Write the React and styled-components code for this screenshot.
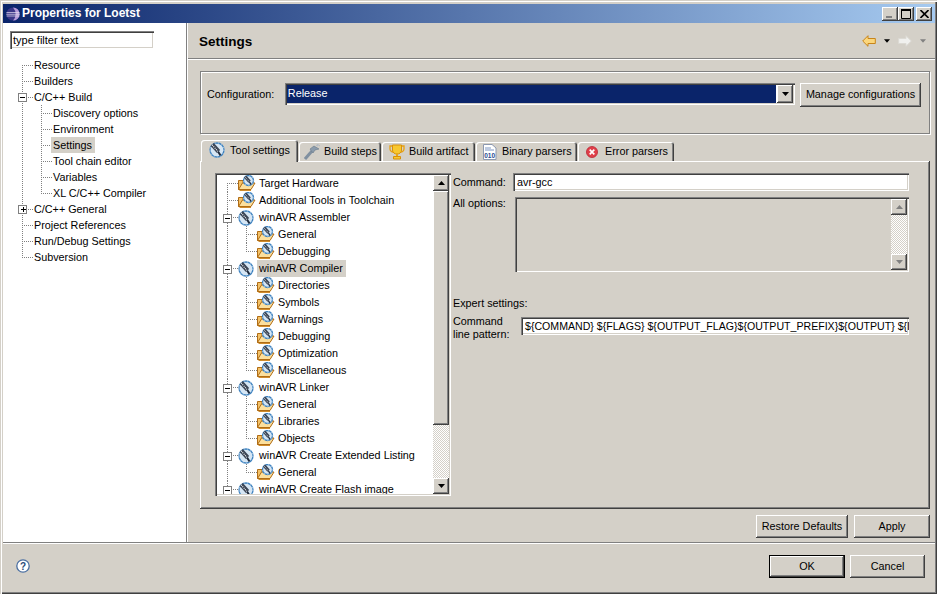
import React from "react";
import styled, { createGlobalStyle } from "styled-components";

const FACE = "#d4d0c8";
const raised = "inset -1px -1px #404040, inset 1px 1px #fff, inset -2px -2px #808080";
const sunken = "inset 1px 1px #808080, inset 2px 2px #404040, inset -1px -1px #fff, inset -2px -2px #d4d0c8";
const dotV = "repeating-linear-gradient(to bottom,#808080 0 1px,transparent 1px 2px)";
const dotH = "repeating-linear-gradient(to right,#808080 0 1px,transparent 1px 2px)";

const Global = createGlobalStyle`
  html, body { margin: 0; padding: 0; background: ${FACE}; }
  * { box-sizing: border-box; }
`;

const Win = styled.div`
  width: 937px; height: 594px; overflow: hidden;
  display: flex; flex-direction: column;
  padding: 4px 2px 3px 3px;
  background: ${FACE};
  font: 10.8px/13px "Liberation Sans", Arial, sans-serif;
  color: #000;
  box-shadow: inset 1px 1px ${FACE}, inset 2px 2px #fff, inset -1px -1px #404040, inset -2px -2px #808080;
`;
const TitleBar = styled.div`
  height: 19px; flex: none;
  display: flex; align-items: center; gap: 2px;
  padding: 0 3px 0 3px;
  background: linear-gradient(to right, #0a246a, #a6caf0);
`;
const TitleText = styled.div`
  flex: 1; color: #fff; font-weight: bold; font-size: 12px;
`;
const WinBtns = styled.div`display: flex; align-items: center;`;
const WinBtn = styled.div`
  width: 16px; height: 14px; background: ${FACE}; box-shadow: ${raised};
  margin-left: ${p => p.$gap || 0}px;
  display: flex; align-items: center; justify-content: center;
`;
const Main = styled.div`
  height: 519px; flex: none; margin-top: 0;
  display: flex;
`;
const Side = styled.div`
  width: 183px; flex: none; background: #fff;
  padding: 7px 0 0 7px;
  border-top: 1px solid #fff;
`;
const Filter = styled.div`
  width: 144px; height: 18px;
  background: #fff; box-shadow: ${sunken};
  padding: 3px 0 0 3px; font-size: 11px; line-height: 13px;
  margin-bottom: 8px;
`;
const SideTree = styled.div`margin-left: 4px;`;
const VSep = styled.div`
  width: 2px; flex: none; background: linear-gradient(to right, #808080 1px, #fff 1px);
`;
const Right = styled.div`flex: 1; min-width: 0; display: flex; flex-direction: column;`;
const Head = styled.div`
  height: 36px; flex: none;
  display: flex; align-items: center; justify-content: space-between;
  padding: 1px 9px 0 11px;
  border-bottom: 1px solid #808080;
  box-shadow: 0 1px #fff;
`;
const HeadTitle = styled.div`font-weight: bold; font-size: 13.5px;`;
const Nav = styled.div`display: flex; align-items: center; gap: 8px;`;
const Body = styled.div`
  flex: 1; padding: 12px 5px 0 12px; display: flex; flex-direction: column;
`;
const Group = styled.div`
  height: 63px; flex: none;
  border: 1px solid #808080; box-shadow: 1px 1px #fff, inset 1px 1px #fff;
  display: flex; align-items: flex-start;
  padding: 11px 8px 0 6px;
`;
const GroupLabel = styled.div`width: 78px; padding-top: 5px;`;
const Combo = styled.div`
  width: 511px; height: 22px; background: #fff; box-shadow: ${sunken};
  padding: 2px; display: flex; gap: 0;
`;
const ComboText = styled.div`
  flex: 1; background: #0a246a; color: #fff; padding: 2px 0 0 1px; margin-right: 1px;
`;
const ComboBtn = styled.div`
  width: 16px; background: ${FACE}; box-shadow: ${raised};
  display: flex; align-items: center; justify-content: center;
`;
const Btn = styled.div`
  width: ${p => p.$w}px; height: ${p => p.$h || 23}px; flex: none;
  margin-left: ${p => p.$ml || 0}px;
  background: ${FACE};
  box-shadow: ${p => p.$def
    ? "inset 0 0 0 1px #000, inset -2px -2px #404040, inset 2px 2px #fff, inset -3px -3px #808080"
    : raised};
  display: flex; align-items: center; justify-content: center;
  padding-bottom: 1px;
`;
const TabBar = styled.div`
  height: 21px; flex: none; margin-top: 6px; padding-left: 1px;
  display: flex; align-items: flex-end;
`;
const Tab = styled.div`
  width: ${p => p.$w}px; height: ${p => p.$active ? 22 : 19}px; flex: none;
  margin-bottom: ${p => p.$active ? -1 : 0}px;
  margin-right: 1px;
  position: relative; z-index: ${p => p.$active ? 1 : 0};
  display: flex; align-items: center;
  padding-left: ${p => p.$pl}px;
  padding-bottom: ${p => p.$active ? 2 : 0}px;
  background: ${FACE};
  border-radius: 3px 3px 0 0;
  box-shadow: inset 1px 1px #fff, inset -1px 0 #404040, inset -2px 0 #808080;
`;
const TabIcon = styled.div`
  width: ${p => p.$w}px; flex: none; display: flex; align-items: center;
`;
const Folder = styled.div`
  height: 348px; flex: none;
  background: ${FACE}; box-shadow: inset -1px -1px #404040, inset 1px 1px #fff, inset -2px -2px #808080;
  padding: 12px 21px 0 15px;
  display: flex;
`;
const TreeBox = styled.div`
  width: 236px; height: 323px; flex: none;
  box-shadow: ${sunken}; background: #fff;
  padding: 2px; display: flex;
`;
const TreeScroll = styled.div`flex: 1; min-width: 0; height: 319px; overflow: hidden; padding-left: 2px;`;
const Bar = styled.div`
  width: 16px; flex: none; display: flex; flex-direction: column; height: 100%;
`;
const BarBtn = styled.div`
  height: ${p => p.$h || 16}px; flex: none; background: ${FACE}; box-shadow: ${raised};
  display: flex; align-items: center; justify-content: center;
`;
const Thumb = styled.div`height: ${p => p.$h}px; flex: none; background: ${FACE}; box-shadow: ${raised};`;
const Hatch = styled.div`
  flex: 1;
  background: repeating-conic-gradient(#fff 0 25%, ${FACE} 0 50%) 0 0/2px 2px;
`;
const Opts = styled.div`
  flex: 1; min-width: 0; padding-left: 2px; display: flex; flex-direction: column;
`;
const OptRow = styled.div`display: flex; align-items: ${p => p.$align || "center"}; margin-top: ${p => p.$mt || 0}px;`;
const OptLabel = styled.div`width: ${p => p.$w}px; flex: none;`;
const TextInput = styled.div`
  flex: 1; min-width: 0; height: 18px; background: #fff; box-shadow: ${sunken};
  padding: 3px 0 0 4px; white-space: nowrap; overflow: hidden;
`;
const PatternInput = styled(TextInput)`font-size: 10.6px; margin-top: 2px;`;
const OptionsBox = styled.div`
  flex: 1; height: 75px; box-shadow: ${sunken}; background: ${FACE};
  padding: 2px; display: flex; justify-content: flex-end;
`;
const Expert = styled.div`margin-top: 25px;`;
const ApplyRow = styled.div`
  height: 34px; flex: none; display: flex; justify-content: flex-end; align-items: flex-start;
  padding-top: 6px;
`;
const Rule = styled.div`
  height: 2px; flex: none; background: linear-gradient(to bottom, #808080 1px, #fff 1px);
`;
const Foot = styled.div`
  flex: 1; display: flex; align-items: flex-start; justify-content: space-between;
  padding: 11px 10px 0 13px;
`;
const FootBtns = styled.div`display: flex;`;
const HelpWrap = styled.div`padding-top: 4px;`;

/* tree */
const Row = styled.div`
  height: ${p => p.$h}px; display: flex; align-items: stretch; white-space: nowrap;
`;
const backgrounds = (kind, h) => {
  const mid = Math.floor(h / 2);
  const horiz = `${dotH} 8px ${mid}px / 100% 1px no-repeat`;
  switch (kind) {
    case "v": return `${dotV} 8px 0 / 1px 100% no-repeat`;
    case "tee": return `${horiz}, ${dotV} 8px 0 / 1px 100% no-repeat`;
    case "ell": return `${horiz}, ${dotV} 8px 0 / 1px ${mid}px no-repeat`;
    case "first": return `${horiz}, ${dotV} 8px ${mid}px / 1px ${h - mid}px no-repeat`;
    default: return "none";
  }
};
const Cell = styled.div`
  width: 19px; flex: none; display: flex; align-items: center;
  padding-left: 4px;
  background: ${p => backgrounds(p.$kind, p.$h)};
`;
const Exp = styled.div`
  width: 9px; height: 9px; background: #fff; border: 1px solid #808080;
  display: flex; align-items: center; justify-content: center; position: relative;
  margin-top: 1px;
`;
const ExpH = styled.div`width: 5px; height: 1px; background: #000;`;
const ExpV = styled.div`width: 1px; height: 5px; background: #000; margin-left: -3px;`;
const IconCell = styled.div`width: 20px; flex: none; display: flex; align-items: center;`;
const Label = styled.div`
  margin-left: -1px; padding: 0 3px 0 2px; height: 100%;
  display: flex; align-items: center;
  background: ${p => p.$sel ? FACE : "transparent"};
`;

const Dial = ({ cx = 8, cy = 8, r = 7 }) => (
  <g>
    <circle cx={cx} cy={cy} r={r} fill="#d6e6f4" stroke="#3f83c0" strokeWidth="1.3" />
    <circle cx={cx} cy={cy} r={r} fill="none" stroke="#fff" strokeWidth=".7" strokeDasharray=".8 2.6" />
    <path d={`M${cx - r * 0.68} ${cy - r * 0.78}L${cx + r * 0.22} ${cy + r * 0.22}`} stroke="#3c4656" strokeWidth={r * 0.62} />
    <path d={`M${cx - r * 0.7} ${cy - r * 0.72}L${cx + r * 0.2} ${cy + r * 0.28}`} stroke="#fff" strokeWidth={r * 0.16} strokeDasharray="1 1" />
    <path d={`M${cx + r * 0.15} ${cy + r * 0.2}L${cx + r * 0.5} ${cy + r * 0.8}`} stroke="#1f2a3a" strokeWidth={r * 0.28} />
  </g>
);
const ToolIcon = () => (
  <svg width="16" height="16" viewBox="0 0 16 16"><Dial /></svg>
);
const FolderIcon = () => (
  <svg width="18" height="16" viewBox="0 0 18 16" style={{ marginTop: -1 }}>
    <path d="M.5 14.5V5.5H5V8H12V14.5Z" fill="#f4c268" stroke="#b06c14" />
    <path d="M.5 14.5L4.5 8H17L13 14.5Z" fill="#fcdf9c" stroke="#b06c14" />
    <path d="M1.5 15.5H13" stroke="#d08c2c" />
    <Dial cx={10.5} cy={5.5} r={5} />
  </svg>
);
const RowView = ({ r, h }) => (
  <Row $h={h}>
    {r.c.map((k, i) => {
      const kind = k === "plus" || k === "minus" ? "tee" : k;
      return (
        <Cell key={i} $kind={kind} $h={h}>
          {(k === "plus" || k === "minus") && (
            <Exp><ExpH />{k === "plus" && <ExpV />}</Exp>
          )}
        </Cell>
      );
    })}
    {r.i && <IconCell>{r.i === "t" ? <ToolIcon /> : <FolderIcon />}</IconCell>}
    <Label $sel={r.sel}>{r.t}</Label>
  </Row>
);

const sideRows = [
  { c: ["first"], t: "Resource" },
  { c: ["tee"], t: "Builders" },
  { c: ["minus"], t: "C/C++ Build" },
  { c: ["v", "tee"], t: "Discovery options" },
  { c: ["v", "tee"], t: "Environment" },
  { c: ["v", "tee"], t: "Settings", sel: true },
  { c: ["v", "tee"], t: "Tool chain editor" },
  { c: ["v", "tee"], t: "Variables" },
  { c: ["v", "ell"], t: "XL C/C++ Compiler" },
  { c: ["plus"], t: "C/C++ General" },
  { c: ["tee"], t: "Project References" },
  { c: ["tee"], t: "Run/Debug Settings" },
  { c: ["ell"], t: "Subversion" },
];
const f = "f", T = "t";
const toolRows = [
  { c: ["first"], i: f, t: "Target Hardware" },
  { c: ["tee"], i: f, t: "Additional Tools in Toolchain" },
  { c: ["minus"], i: T, t: "winAVR Assembler" },
  { c: ["v", "tee"], i: f, t: "General" },
  { c: ["v", "ell"], i: f, t: "Debugging" },
  { c: ["minus"], i: T, t: "winAVR Compiler", sel: true },
  { c: ["v", "tee"], i: f, t: "Directories" },
  { c: ["v", "tee"], i: f, t: "Symbols" },
  { c: ["v", "tee"], i: f, t: "Warnings" },
  { c: ["v", "tee"], i: f, t: "Debugging" },
  { c: ["v", "tee"], i: f, t: "Optimization" },
  { c: ["v", "ell"], i: f, t: "Miscellaneous" },
  { c: ["minus"], i: T, t: "winAVR Linker" },
  { c: ["v", "tee"], i: f, t: "General" },
  { c: ["v", "tee"], i: f, t: "Libraries" },
  { c: ["v", "ell"], i: f, t: "Objects" },
  { c: ["minus"], i: T, t: "winAVR Create Extended Listing" },
  { c: ["v", "ell"], i: f, t: "General" },
  { c: ["minus"], i: T, t: "winAVR Create Flash image" },
];

const Down = ({ color = "#000", w = 7 }) => (
  <svg width={w} height="4" viewBox="0 0 7 4"><path d="M0 0H7L3.5 4Z" fill={color} /></svg>
);
const Up = ({ color = "#000" }) => (
  <svg width="7" height="4" viewBox="0 0 7 4"><path d="M0 4H7L3.5 0Z" fill={color} /></svg>
);
const Logo = () => (
  <svg width="14" height="14" viewBox="0 0 16 16">
    <circle cx="8" cy="8" r="7.5" fill="#3a3688" />
    <path d="M8 .5A7.5 7.5 0 0 1 8 15.5A11 11 0 0 0 8 .5Z" fill="#b49ad8" />
    <path d="M.5 6.3H15.5M.3 8.3H15.7M.6 10.3H15.4" stroke="#e6e0f2" strokeWidth=".8" />
  </svg>
);
const Hammer = () => (
  <svg width="16" height="16" viewBox="0 0 16 16">
    <path d="M1 15L8 7" stroke="#8090a0" strokeWidth="3" />
    <path d="M6 5L10 2L15 5L11 6L9 9Z" fill="#8c9cac" stroke="#66788a" strokeWidth=".6" />
    <path d="M12 1L14 2M13 0L16 2" stroke="#a8b4c0" strokeWidth=".8" />
  </svg>
);
const Trophy = () => (
  <svg width="16" height="16" viewBox="0 0 16 16">
    <path d="M3 2H1V5C1 7 3 8 4 8M13 2H15V5C15 7 13 8 12 8" fill="none" stroke="#e8a010" strokeWidth="1.3" />
    <path d="M3.5 1H12.5V6C12.5 9 10 10 8 10C6 10 3.5 9 3.5 6Z" fill="#f8c830" stroke="#d89008" />
    <path d="M7 10H9V12H7Z" fill="#e8a818" />
    <path d="M4.5 12.5H11.5V15H4.5Z" fill="#f8c830" stroke="#d89008" />
  </svg>
);
const Binary = () => (
  <svg width="14" height="16" viewBox="0 0 14 16">
    <path d="M.5.5H9L13 4V15.5H.5Z" fill="#fff" stroke="#8c98b0" />
    <path d="M2 4H8M2 6H11" stroke="#7c96c4" />
    <text x="1.2" y="14" fontSize="6.5" fontWeight="bold" fontFamily="Liberation Sans" fill="#2a4a90">010</text>
  </svg>
);
const ErrorIcon = () => (
  <svg width="12" height="12" viewBox="0 0 13 13">
    <circle cx="6.5" cy="6.5" r="6" fill="#e0404a" stroke="#b82030" strokeWidth=".8" />
    <path d="M4 4L9 9M9 4L4 9" stroke="#fff" strokeWidth="1.8" />
  </svg>
);
const Help = () => (
  <svg width="14" height="14" viewBox="0 0 14 14">
    <circle cx="7" cy="7" r="6.2" fill="#fff" stroke="#4a6ea0" strokeWidth="1.3" />
    <text x="7" y="10.5" textAnchor="middle" fontSize="10" fontWeight="bold" fontFamily="Liberation Sans" fill="#2a4a78">?</text>
  </svg>
);
const ArrowBack = () => (
  <svg width="14" height="12" viewBox="0 0 14 12">
    <path d="M.7 6L6 .7V3.5H13.3V8.5H6V11.3Z" fill="#fbd67c" stroke="#c8851a" />
  </svg>
);
const ArrowFwd = () => (
  <svg width="14" height="12" viewBox="0 0 14 12">
    <path d="M13.3 6L8 .7V3.5H.7V8.5H8V11.3Z" fill="#f0f0ee" stroke="#dcdad4" />
  </svg>
);

export default function App() {
  return (
    <Win>
      <Global />
      <TitleBar>
        <Logo />
        <TitleText>Properties for Loetst</TitleText>
        <WinBtns>
          <WinBtn>
            <svg width="8" height="8" viewBox="0 0 8 8"><path d="M0 6H6V8H0Z" fill="#808080" /></svg>
          </WinBtn>
          <WinBtn>
            <svg width="10" height="10" viewBox="0 0 10 10"><path d="M.5 1.5H9.5V9.5H.5Z" fill="none" stroke="#000" /><path d="M0 1H10" stroke="#000" strokeWidth="2" /></svg>
          </WinBtn>
          <WinBtn $gap={2}>
            <svg width="9" height="8" viewBox="0 0 9 8"><path d="M.5 0L8.5 8M8.5 0L.5 8" stroke="#000" strokeWidth="1.6" /></svg>
          </WinBtn>
        </WinBtns>
      </TitleBar>
      <Main>
        <Side>
          <Filter>type filter text</Filter>
          <SideTree>
            {sideRows.map((r, i) => <RowView key={i} r={r} h={16} />)}
          </SideTree>
        </Side>
        <VSep />
        <Right>
          <Head>
            <HeadTitle>Settings</HeadTitle>
            <Nav>
              <ArrowBack />
              <Down w={6} />
              <ArrowFwd />
              <Down w={6} color="#808080" />
            </Nav>
          </Head>
          <Body>
            <Group>
              <GroupLabel>Configuration:</GroupLabel>
              <Combo>
                <ComboText>Release</ComboText>
                <ComboBtn><Down /></ComboBtn>
              </Combo>
              <Btn $w={121} $h={24} $ml={5}>Manage configurations</Btn>
            </Group>
            <TabBar>
              <Tab $w={97} $pl={8} $active>
                <TabIcon $w={21}><ToolIcon /></TabIcon>Tool settings
              </Tab>
              <Tab $w={82} $pl={5}><TabIcon $w={20}><Hammer /></TabIcon>Build steps</Tab>
              <Tab $w={93} $pl={7}><TabIcon $w={20}><Trophy /></TabIcon>Build artifact</Tab>
              <Tab $w={101} $pl={7}><TabIcon $w={19}><Binary /></TabIcon>Binary parsers</Tab>
              <Tab $w={96} $pl={8}><TabIcon $w={19}><ErrorIcon /></TabIcon>Error parsers</Tab>
            </TabBar>
            <Folder>
              <TreeBox>
                <TreeScroll>
                  {toolRows.map((r, i) => <RowView key={i} r={r} h={17} />)}
                </TreeScroll>
                <Bar>
                  <BarBtn><Up /></BarBtn>
                  <Thumb $h={234} />
                  <Hatch />
                  <BarBtn><Down /></BarBtn>
                </Bar>
              </TreeBox>
              <Opts>
                <OptRow>
                  <OptLabel $w={60}>Command:</OptLabel>
                  <TextInput>avr-gcc</TextInput>
                </OptRow>
                <OptRow $align="flex-start" $mt={6}>
                  <OptLabel $w={62}>All options:</OptLabel>
                  <OptionsBox>
                    <Bar>
                      <BarBtn><Up color="#808080" /></BarBtn>
                      <Hatch />
                      <BarBtn><Down color="#808080" /></BarBtn>
                    </Bar>
                  </OptionsBox>
                </OptRow>
                <Expert>Expert settings:</Expert>
                <OptRow $mt={5} $align="flex-start">
                  <OptLabel $w={68}>Command<br />line pattern:</OptLabel>
                  <PatternInput>{"${COMMAND} ${FLAGS} ${OUTPUT_FLAG}${OUTPUT_PREFIX}${OUTPUT} ${INPUTS}"}</PatternInput>
                </OptRow>
              </Opts>
            </Folder>
            <ApplyRow>
              <Btn $w={92}>Restore Defaults</Btn>
              <Btn $w={76} $ml={6}>Apply</Btn>
            </ApplyRow>
          </Body>
        </Right>
      </Main>
      <Rule />
      <Foot>
        <HelpWrap><Help /></HelpWrap>
        <FootBtns>
          <Btn $w={76} $def>OK</Btn>
          <Btn $w={75} $ml={5}>Cancel</Btn>
        </FootBtns>
      </Foot>
    </Win>
  );
}
